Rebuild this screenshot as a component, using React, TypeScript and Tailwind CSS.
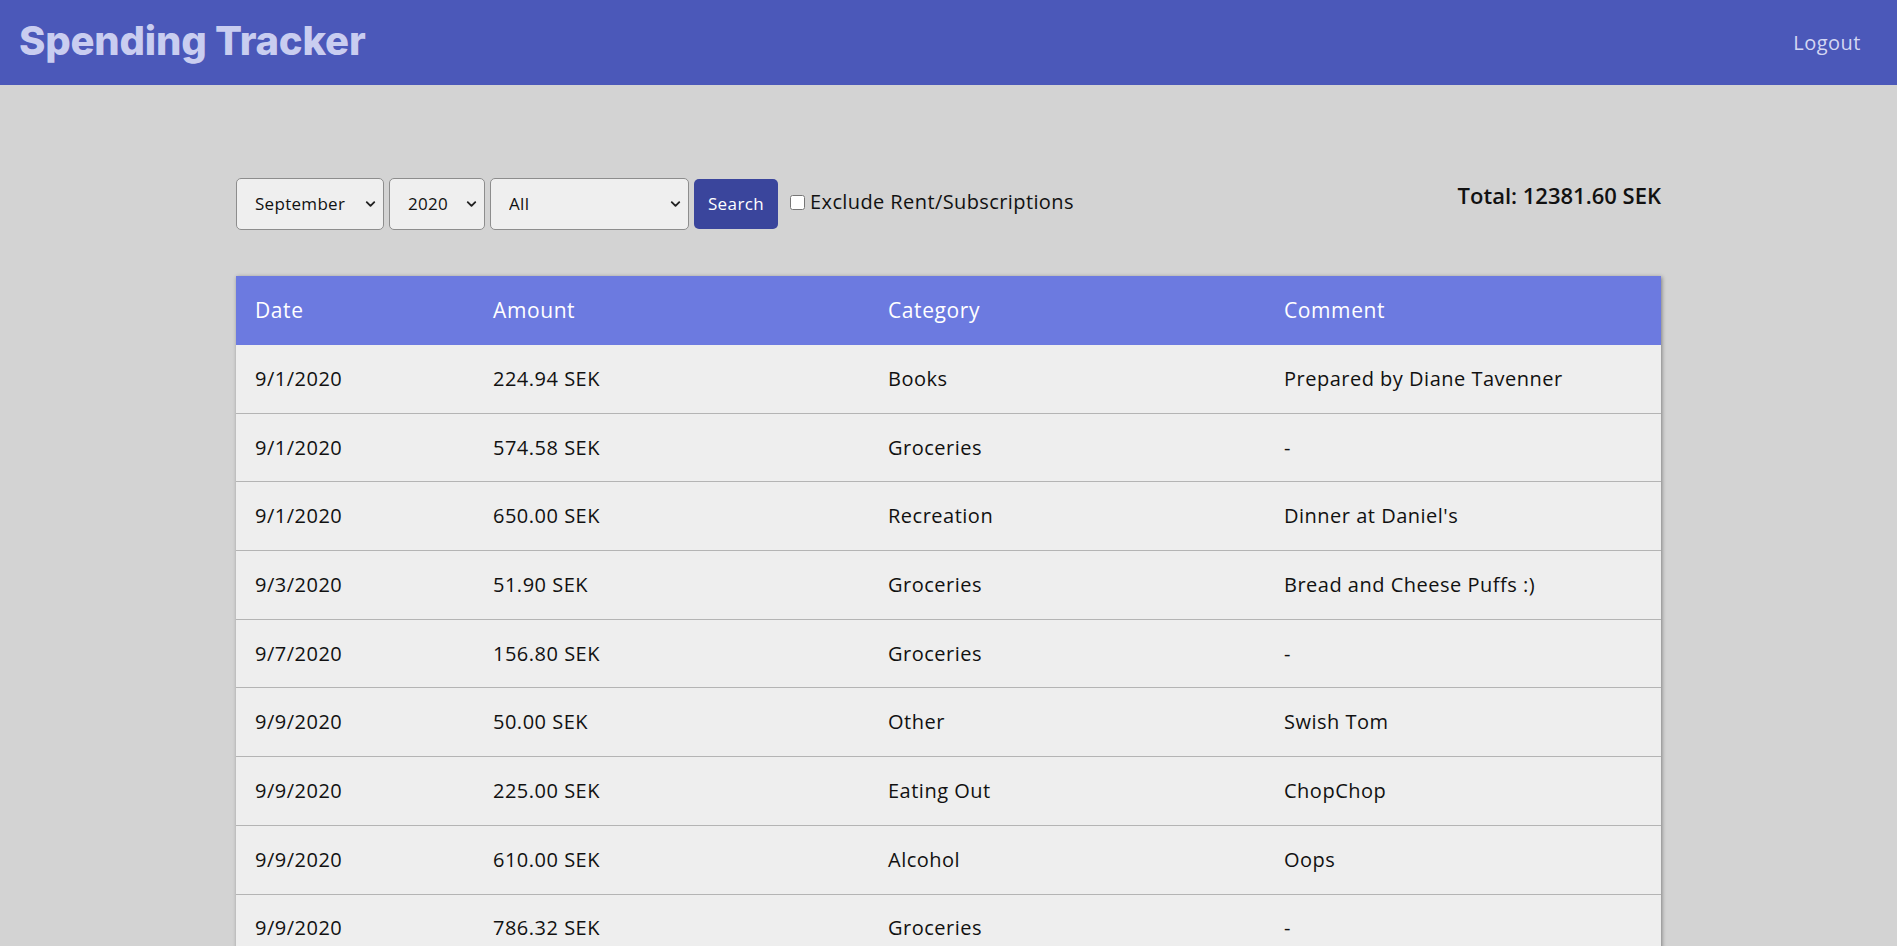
import React, { useState } from 'react';
import { ChevronDown } from 'lucide-react';

interface Expense {
  date: string;
  amount: string;
  category: string;
  comment: string;
}

const expenses: Expense[] = [
  { date: '9/1/2020', amount: '224.94 SEK', category: 'Books', comment: 'Prepared by Diane Tavenner' },
  { date: '9/1/2020', amount: '574.58 SEK', category: 'Groceries', comment: '-' },
  { date: '9/1/2020', amount: '650.00 SEK', category: 'Recreation', comment: "Dinner at Daniel's" },
  { date: '9/3/2020', amount: '51.90 SEK', category: 'Groceries', comment: 'Bread and Cheese Puffs :)' },
  { date: '9/7/2020', amount: '156.80 SEK', category: 'Groceries', comment: '-' },
  { date: '9/9/2020', amount: '50.00 SEK', category: 'Other', comment: 'Swish Tom' },
  { date: '9/9/2020', amount: '225.00 SEK', category: 'Eating Out', comment: 'ChopChop' },
  { date: '9/9/2020', amount: '610.00 SEK', category: 'Alcohol', comment: 'Oops' },
  { date: '9/9/2020', amount: '786.32 SEK', category: 'Groceries', comment: '-' },
];

const months = ['January', 'February', 'March', 'April', 'May', 'June', 'July', 'August', 'September', 'October', 'November', 'December'];
const categories = ['All', 'Books', 'Groceries', 'Recreation', 'Other', 'Eating Out', 'Alcohol'];

function Select({ value, options, onChange, width }: { value: string; options: string[]; onChange: (v: string) => void; width: string }) {
  return (
    <div className={`relative h-[52px] ${width}`}>
      <select
        value={value}
        onChange={(e) => onChange(e.target.value)}
        className="appearance-none w-full h-full rounded-[5px] border border-[#8d8d8d] bg-[#efefef] pl-[18px] pr-6 text-[17px] tracking-[0.3px] text-[#111] outline-none"
      >
        {options.map((o) => (
          <option key={o} value={o}>{o}</option>
        ))}
      </select>
      <ChevronDown size={15} strokeWidth={3} className="pointer-events-none absolute right-[6px] top-1/2 -translate-y-1/2 text-[#222]" />
    </div>
  );
}

export default function App() {
  const [month, setMonth] = useState('September');
  const [year, setYear] = useState('2020');
  const [category, setCategory] = useState('All');
  const [exclude, setExclude] = useState(false);

  return (
    <div className="min-h-screen bg-[#d3d3d3] font-['Open_Sans',sans-serif] text-[#111]">
      {/* Header */}
      <header className="h-[85px] bg-[#4b58b9] flex items-center justify-between pl-[19px] pr-[36px]">
        <h1 className="font-['Inter',sans-serif] text-[40px] font-extrabold text-[#c9cdf0] tracking-[-0.2px] -mt-1">
          Spending Tracker
        </h1>
        <button className="text-[20px] tracking-[0.5px] text-[#d4d7f3]">Logout</button>
      </header>

      <main className="mx-auto w-[1425px] pt-[93px] pb-10">
        {/* Filters */}
        <div className="flex items-start justify-between">
          <div className="flex items-center gap-[5px]">
            <Select value={month} options={months} onChange={setMonth} width="w-[148px]" />
            <Select value={year} options={['2019', '2020', '2021']} onChange={setYear} width="w-[96px]" />
            <Select value={category} options={categories} onChange={setCategory} width="w-[199px]" />
            <button className="h-[50px] w-[84px] rounded-[5px] bg-[#3a459c] text-white text-[17px] tracking-[0.4px]">Search</button>
            <label className="ml-[7px] flex items-center gap-[5px] text-[20px] tracking-[0.4px] -mt-[4px]">
              <input
                type="checkbox"
                checked={exclude}
                onChange={(e) => setExclude(e.target.checked)}
                className="w-[15px] h-[15px] rounded-[3px] border border-[#777] bg-white"
              />
              Exclude Rent/Subscriptions
            </label>
          </div>
          <div className="text-[22px] font-semibold mt-[1px]">Total: 12381.60 SEK</div>
        </div>

        {/* Table */}
        <div className="mt-[46px] shadow-[1px_1px_4px_rgba(0,0,0,0.4)]">
          <div className="grid grid-cols-[238px_395px_396px_1fr] h-[69px] items-center bg-[#6c7ae0] text-white text-[21px] tracking-[0.6px]">
            <div className="pl-[19px]">Date</div>
            <div className="pl-[19px]">Amount</div>
            <div className="pl-[19px]">Category</div>
            <div className="pl-[19px]">Comment</div>
          </div>
          {expenses.map((e, i) => (
            <div
              key={i}
              className="grid grid-cols-[238px_395px_396px_1fr] h-[68.7px] items-center bg-[#eeeeee] border-b border-[#b4b4b4] text-[20px] tracking-[0.5px] text-[#111]"
            >
              <div className="pl-[19px]">{e.date}</div>
              <div className="pl-[19px]">{e.amount}</div>
              <div className="pl-[19px]">{e.category}</div>
              <div className="pl-[19px]">{e.comment}</div>
            </div>
          ))}
        </div>
      </main>
    </div>
  );
}
